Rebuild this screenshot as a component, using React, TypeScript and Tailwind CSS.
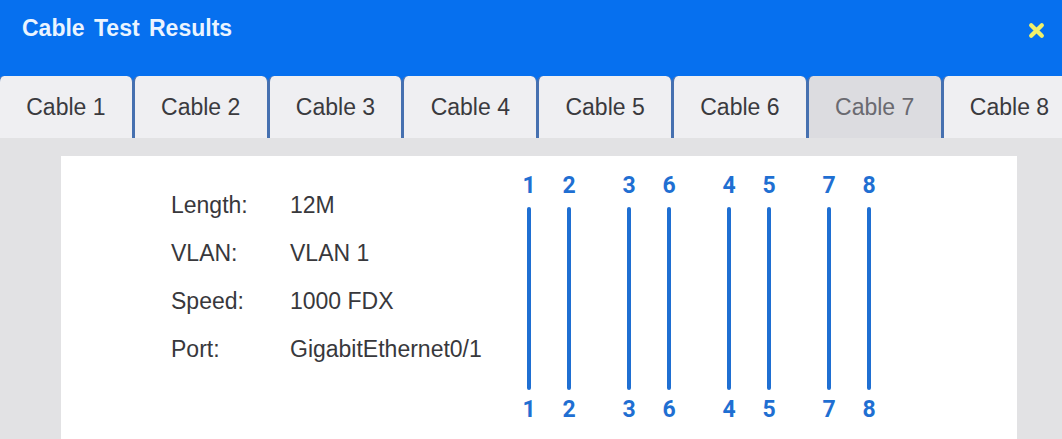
const tabs = ["Cable 1", "Cable 2", "Cable 3", "Cable 4", "Cable 5", "Cable 6", "Cable 7", "Cable 8"];

const info = [
  { label: "Length:", value: "12M" },
  { label: "VLAN:", value: "VLAN 1" },
  { label: "Speed:", value: "1000 FDX" },
  { label: "Port:", value: "GigabitEthernet0/1" },
];

// pins are drawn in pairs: 1-2, 3-6, 4-5, 7-8
const pairs = [
  [1, 2],
  [3, 6],
  [4, 5],
  [7, 8],
];

function Wire({ pin }: { pin: number }) {
  return (
    <div className="w-[40px] flex flex-col items-center">
      <span className="text-[23px] leading-[24px] font-bold text-[#1f6fd2] font-['Roboto',Arial,sans-serif]">{pin}</span>
      <div className="mt-[9px] w-[4px] h-[183px] rounded-full bg-[#1f6fd2]" />
      <span className="mt-[8px] text-[23px] leading-[24px] font-bold text-[#1f6fd2] font-['Roboto',Arial,sans-serif]">{pin}</span>
    </div>
  );
}

export default function App() {
  return (
    <div className="w-[1062px] h-[439px] overflow-hidden bg-[#e2e2e4] font-['Liberation_Sans',Arial,sans-serif]">
      {/* title bar */}
      <div className="h-[76px] bg-[#0670ef] flex items-start justify-between pl-[22px] pr-[17px] pt-[12px]">
        <h1 className="text-[23px] leading-[32px] font-bold text-[#eaf4ff] [word-spacing:3px]">Cable Test Results</h1>
        <svg width="17" height="17" viewBox="0 0 16 16" className="mt-[10px]">
          <path d="M3 3 L13 13 M13 3 L3 13" stroke="#f0f06a" strokeWidth="4" strokeLinecap="round" />
        </svg>
      </div>

      {/* tabs */}
      <div className="flex h-[62px] bg-[#0670ef] -ml-[2px]">
        {tabs.map((t, i) => (
          <div
            key={t}
            className={
              i === 6
                ? "w-[134.8px] shrink-0 h-full rounded-t-[6px] border-l-2 border-r border-[#4670b0] bg-[#dcdce0] flex items-center justify-center text-[23px] text-[#6a6a70]"
                : "w-[134.8px] shrink-0 h-full rounded-t-[6px] border-l-2 border-r border-[#4670b0] bg-[#efeff2] flex items-center justify-center text-[23px] text-[#3a3a3e]"
            }
          >
            {t}
          </div>
        ))}
      </div>

      {/* body */}
      <div className="pl-[61px] pt-[18px]">
        <div className="w-[956px] h-[283px] bg-white flex">
          <div className="w-[440px] pl-[110px] pt-[25px] shrink-0">
            {info.map((row) => (
              <div key={row.label} className="flex h-[48px] items-center text-[23px] text-[#38383c]">
                <span className="w-[119px]">{row.label}</span>
                <span>{row.value}</span>
              </div>
            ))}
          </div>
          <div className="ml-[8px] pt-[18px] flex gap-[20px]">
            {pairs.map((p) => (
              <div key={p.join("-")} className="flex">
                {p.map((pin) => (
                  <Wire key={pin} pin={pin} />
                ))}
              </div>
            ))}
          </div>
        </div>
      </div>
    </div>
  );
}
